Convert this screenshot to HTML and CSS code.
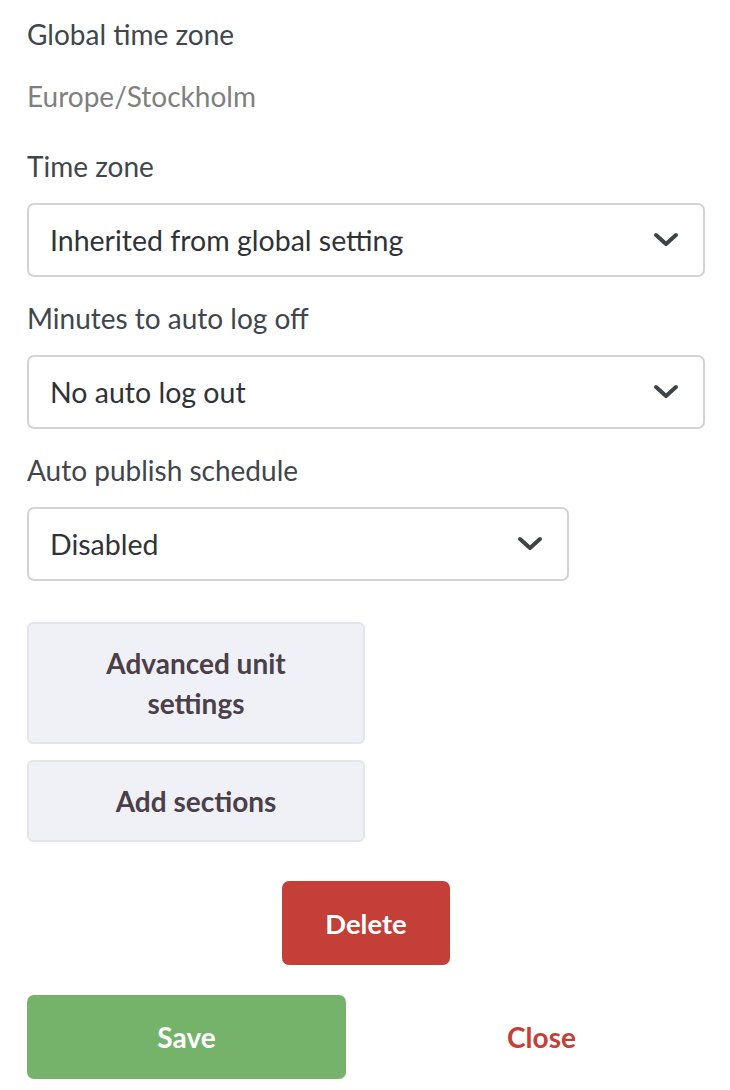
FILE: index.html
```html
<!DOCTYPE html>
<html>
<head>
<meta charset="utf-8">
<link rel="stylesheet" href="styles.css">
</head>
<body>
<div class="page">
  <div class="field">
    <div class="label">Global time zone</div>
    <div class="value">Europe/Stockholm</div>
  </div>
  <div class="field">
    <div class="label">Time zone</div>
    <div class="select full">
      <span>Inherited from global setting</span>
      <svg class="chev" width="26" height="16" viewBox="0 0 26 16"><path d="M3 3 L13 12 L23 3" fill="none" stroke="#3d4349" stroke-width="4" stroke-linecap="round" stroke-linejoin="round"/></svg>
    </div>
  </div>
  <div class="field">
    <div class="label">Minutes to auto log off</div>
    <div class="select full">
      <span>No auto log out</span>
      <svg class="chev" width="26" height="16" viewBox="0 0 26 16"><path d="M3 3 L13 12 L23 3" fill="none" stroke="#3d4349" stroke-width="4" stroke-linecap="round" stroke-linejoin="round"/></svg>
    </div>
  </div>
  <div class="field">
    <div class="label">Auto publish schedule</div>
    <div class="select short">
      <span>Disabled</span>
      <svg class="chev" width="26" height="16" viewBox="0 0 26 16"><path d="M3 3 L13 12 L23 3" fill="none" stroke="#3d4349" stroke-width="4" stroke-linecap="round" stroke-linejoin="round"/></svg>
    </div>
  </div>
  <div class="secondary-buttons">
    <button class="btn-light">Advanced unit<br>settings</button>
    <button class="btn-light">Add sections</button>
  </div>
  <div class="delete-row">
    <button class="btn-delete">Delete</button>
  </div>
  <div class="footer">
    <button class="btn-save">Save</button>
    <button class="btn-close">Close</button>
  </div>
</div>
</body>
</html>
```

FILE: styles.css
```css
* { box-sizing: border-box; }
html, body { margin: 0; padding: 0; background: #fff; }
body { font-family: "Lato", "Open Sans", sans-serif; }
.page { padding: 17px 25px 0 27px; width: 730px; }
.label { font-size: 28px; color: #40464d; line-height: 34px; }
.value { font-size: 28px; color: #7f7f7f; line-height: 34px; margin-top: 28px; margin-bottom: 36px; }
.select {
  height: 74px; border: 2px solid #d3d3d3; border-radius: 7px;
  display: flex; align-items: center; justify-content: space-between;
  padding: 0 24px 0 21px; font-size: 28.5px; color: #2f3338;
  margin-top: 20px; margin-bottom: 24px;
}
.select.full { width: 678px; }
.select.short { width: 542px; }
.secondary-buttons { display: flex; flex-direction: column; gap: 16px; margin-top: 41px; }
button { font-family: inherit; cursor: pointer; padding: 0; }
.btn-light {
  width: 338px; height: 122px; background: #f0f1f6; border: 2px solid #e4e5ea;
  border-radius: 6px; color: #4b3f49; font-weight: 700; font-size: 28px; line-height: 40px;
}
.btn-light:last-child { height: 82px; }
.delete-row { display: flex; justify-content: center; margin-top: 39px; }
.btn-delete {
  width: 168px; height: 84px; background: #c43f37; border: none; border-radius: 7px;
  color: #fff; font-weight: 700; font-size: 27.5px;
}
.footer { display: grid; grid-template-columns: 1fr 1fr; column-gap: 40px; margin-top: 30px; }
.btn-save {
  height: 84px; background: #75b36b; border: none; border-radius: 7px;
  color: #fff; font-weight: 700; font-size: 28px;
}
.btn-close { background: none; border: none; color: #c43f37; font-weight: 700; font-size: 28px; padding-right: 8px; }
```
